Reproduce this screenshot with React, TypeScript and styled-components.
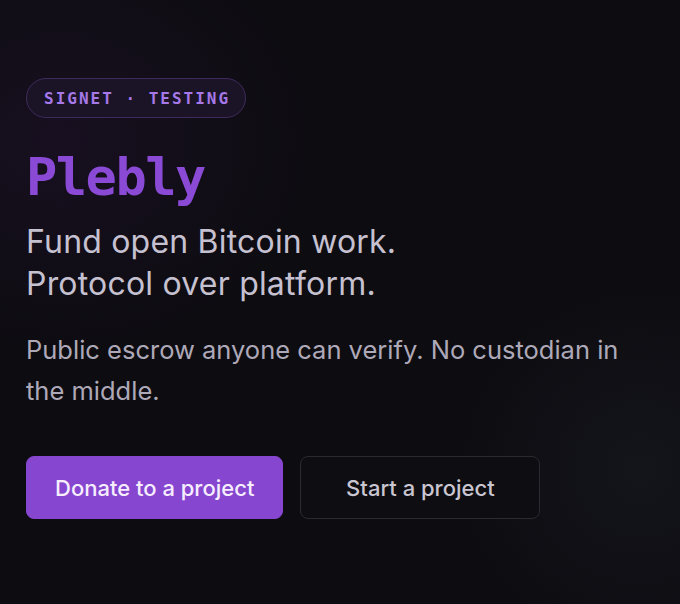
import React from "react";
import styled, { createGlobalStyle } from "styled-components";

const Global = createGlobalStyle`
  html, body { margin: 0; padding: 0; background: #0d0c11; }
  #root { min-height: 604px; }
`;

const Page = styled.main`
  box-sizing: border-box;
  min-height: 604px;
  padding: 78px 26px 40px;
  display: flex;
  flex-direction: column;
  align-items: flex-start;
  background:
    radial-gradient(ellipse 360px 300px at 60px 140px, rgba(120, 50, 170, 0.10), transparent 70%),
    radial-gradient(ellipse 260px 260px at 640px 470px, rgba(80, 100, 110, 0.10), transparent 70%),
    #0d0c11;
  font-family: Inter, "Noto Sans", sans-serif;
`;

const Badge = styled.div`
  box-sizing: border-box;
  height: 40px;
  padding: 0 15px 0 17px;
  display: inline-flex;
  align-items: center;
  border-radius: 999px;
  border: 1px solid #3e2a5c;
  background: #1b1427;
  color: #a678e8;
  font-family: "DejaVu Sans Mono", monospace;
  font-weight: 700;
  font-size: 16px;
  letter-spacing: 2px;
`;

const Title = styled.h1`
  margin: 29px 0 0;
  font-family: "DejaVu Sans Mono", monospace;
  font-weight: 700;
  font-size: 52px;
  line-height: 60px;
  color: #8a4ad6;
  letter-spacing: -1.5px;
`;

const Tagline = styled.h2`
  margin: 14px 0 0;
  font-weight: 400;
  font-size: 32px;
  line-height: 42px;
  letter-spacing: 0.2px;
  color: #c6c1d1;
`;

const Lead = styled.p`
  margin: 24px 0 0;
  font-size: 25.5px;
  line-height: 41px;
  color: #aea9b8;
  max-width: 628px;
`;

const Actions = styled.div`
  margin-top: 45px;
  display: flex;
  gap: 17px;
`;

const Button = styled.button<{ $primary?: boolean }>`
  box-sizing: border-box;
  height: 63px;
  min-width: 240px;
  padding: 0 28px;
  border-radius: 8px;
  font-family: Inter, "Noto Sans", sans-serif;
  font-size: 22px;
  font-weight: 500;
  cursor: pointer;
  border: 1px solid ${(p) => (p.$primary ? "#8646cf" : "#2b2a31")};
  background: ${(p) => (p.$primary ? "#8646cf" : "#0e0d12")};
  color: ${(p) => (p.$primary ? "#f6eefe" : "#c9c6d1")};
`;

export default function App() {
  return (
    <>
      <Global />
      <Page>
        <Badge>SIGNET · TESTING</Badge>
        <Title>Plebly</Title>
        <Tagline>
          Fund open Bitcoin work.
          <br />
          Protocol over platform.
        </Tagline>
        <Lead>Public escrow anyone can verify. No custodian in the middle.</Lead>
        <Actions>
          <Button $primary>Donate to a project</Button>
          <Button>Start a project</Button>
        </Actions>
      </Page>
    </>
  );
}
